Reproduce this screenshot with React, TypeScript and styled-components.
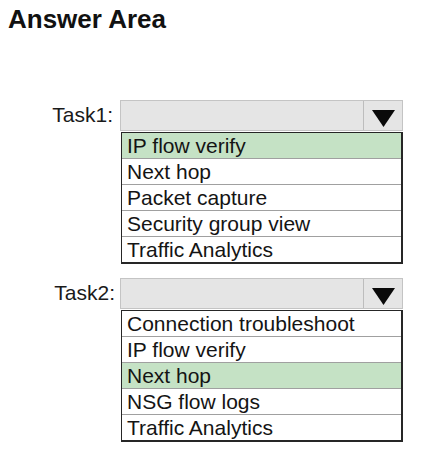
import React from "react";
import styled, { createGlobalStyle } from "styled-components";

const GlobalStyle = createGlobalStyle`
  html, body {
    margin: 0;
    padding: 0;
    background: #ffffff;
  }
  body {
    font-family: "Liberation Sans", Arial, sans-serif;
    color: #141414;
  }
`;

const Page = styled.div`
  width: 421px;
  height: 450px;
  box-sizing: border-box;
  padding: 4px 0 0 8px;
  display: flex;
  flex-direction: column;
`;

const Title = styled.h1`
  margin: 0;
  font-size: 26px;
  line-height: 30px;
  font-weight: 700;
  color: #111;
`;

const Tasks = styled.div`
  margin-top: 66px;
  display: flex;
  flex-direction: column;
  gap: 14px;
`;

const TaskBlock = styled.div`
  display: grid;
  grid-template-columns: 112px 283px;
  grid-template-rows: 31px auto;
`;

const Label = styled.div<{ $shift: number }>`
  grid-column: 1;
  grid-row: 1;
  align-self: center;
  justify-self: end;
  padding-right: ${(p) => 7 - p.$shift}px;
  padding-bottom: 2px;
  font-size: 21px;
  line-height: 24px;
  color: #1a1a1a;
`;

const Select = styled.div`
  grid-column: 2;
  grid-row: 1;
  box-sizing: border-box;
  height: 31px;
  border: 1px solid #c4c4c4;
  background: #e5e5e5;
  display: flex;
`;

const SelectField = styled.div`
  flex: 1;
`;

const ArrowCell = styled.div`
  width: 39px;
  border-left: 1px solid #bdbdbd;
  display: flex;
  align-items: center;
  justify-content: center;
  padding-top: 6px;
  box-sizing: border-box;
`;

const List = styled.ul`
  grid-column: 2;
  grid-row: 2;
  margin: 1px 0 0 1px;
  padding: 0;
  list-style: none;
  box-sizing: border-box;
  border-style: solid;
  border-color: #262626;
  border-width: 1px 2px 2px 1px;
  background: #fff;
`;

const Option = styled.li<{ $selected?: boolean }>`
  box-sizing: border-box;
  height: 26px;
  padding-left: 5px;
  font-size: 21px;
  line-height: 26px;
  white-space: nowrap;
  color: #141414;
  background: ${(p) => (p.$selected ? "#c5e2c5" : "#ffffff")};
  border-bottom: 1px solid #a0a0a0;
  &:last-child {
    border-bottom: none;
    height: 25px;
  }
`;

const Arrow = () => (
  <svg width="23" height="17" viewBox="0 0 23 17" aria-hidden>
    <polygon points="0,0 23,0 11.5,17" fill="#0a0a0a" />
  </svg>
);

type TaskProps = {
  label: string;
  options: string[];
  selected: number;
  shift?: number;
};

const Task = ({ label, options, selected, shift = 0 }: TaskProps) => (
  <TaskBlock>
    <Label $shift={shift}>{label}</Label>
    <Select>
      <SelectField />
      <ArrowCell>
        <Arrow />
      </ArrowCell>
    </Select>
    <List>
      {options.map((o, i) => (
        <Option key={o} $selected={i === selected}>
          {o}
        </Option>
      ))}
    </List>
  </TaskBlock>
);

export default function App() {
  return (
    <>
      <GlobalStyle />
      <Page>
        <Title>Answer Area</Title>
        <Tasks>
          <Task
            label="Task1:"
            selected={0}
            options={[
              "IP flow verify",
              "Next hop",
              "Packet capture",
              "Security group view",
              "Traffic Analytics",
            ]}
          />
          <Task
            label="Task2:"
            selected={2}
            shift={2}
            options={[
              "Connection troubleshoot",
              "IP flow verify",
              "Next hop",
              "NSG flow logs",
              "Traffic Analytics",
            ]}
          />
        </Tasks>
      </Page>
    </>
  );
}
